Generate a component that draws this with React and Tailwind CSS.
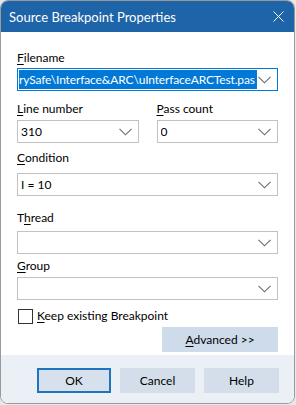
import React from "react";

const font = { fontFamily: 'Lato, "Noto Sans", sans-serif' };

function Chevron() {
  return (
    <svg width="13" height="8" viewBox="0 0 13 8" className="shrink-0">
      <path d="M0.5 0.8 L6.5 6.8 L12.5 0.8" fill="none" stroke="#6b6b6b" strokeWidth="1.1" />
    </svg>
  );
}

function Combo({ value, className = "" }) {
  return (
    <div className={"flex items-center h-[23px] border border-[#c2c2c2] bg-white pl-[3px] pr-[6px] " + className}>
      <div className="flex-1 text-[12px] leading-4 text-black whitespace-nowrap overflow-hidden">{value}</div>
      <Chevron />
    </div>
  );
}

function Label({ pre = "", u, post, className = "" }) {
  return (
    <div className={"h-4 text-[12px] leading-4 text-black whitespace-nowrap " + className}>
      {pre}<span className="underline underline-offset-2">{u}</span>{post}
    </div>
  );
}

export default function App() {
  return (
    <div className="w-[296px] h-[405px] bg-[#e8e8e8] overflow-hidden" style={font}>
      <div className="w-[295px] h-[404px] rounded-lg border border-[#9a9a9a] overflow-hidden flex flex-col bg-white">
        <div className="h-[31px] bg-[#1e64a8] flex items-center pl-[8px] pr-[10px] shrink-0">
          <div className="flex-1 text-white text-[13px] leading-4">Source Breakpoint Properties</div>
          <svg width="11" height="11" viewBox="0 0 11 11">
            <path d="M0.5 0.5 L10.5 10.5 M10.5 0.5 L0.5 10.5" stroke="white" strokeWidth="1" />
          </svg>
        </div>
        <div className="flex-1 px-[16px] flex flex-col">
          <Label u="F" post="ilename" className="mt-[18px]" />
          <div className="mt-[2px] flex items-center h-[23px] border border-[#0078d7] bg-white pl-[1px] pr-[6px]">
            <div className="w-[238px] h-[19px] bg-[#0078d7] text-white text-[12px] tracking-[-0.15px] leading-[19px] whitespace-nowrap overflow-hidden">
              rySafe\Interface&amp;ARC\uInterfaceARCTest.pas
            </div>
            <div className="flex-1" />
            <Chevron />
          </div>
          <div className="mt-[10px] flex gap-[18px]">
            <div className="flex-1 flex flex-col">
              <Label u="L" post="ine number" />
              <Combo value="310" className="mt-[3px]" />
            </div>
            <div className="flex-1 flex flex-col">
              <Label u="P" post="ass count" />
              <Combo value="0" className="mt-[3px]" />
            </div>
          </div>
          <Label u="C" post="ondition" className="mt-[7px]" />
          <Combo value="I = 10" className="mt-[7px]" />
          <Label pre="T" u="h" post="read" className="mt-[14px]" />
          <Combo value="" className="mt-[5px] h-[22px]" />
          <Label u="G" post="roup" className="mt-[4px]" />
          <Combo value="" className="mt-[3px] h-[22px]" />
          <div className="mt-[8px] flex items-center gap-[4px] pl-[1px]">
            <div className="w-[15px] h-[15px] border border-[#333] bg-white" />
            <div className="text-[12px] leading-4 text-black">
              <span className="underline underline-offset-2">K</span>eep existing Breakpoint
            </div>
          </div>
          <div className="mt-[3px] flex justify-end">
            <div className="w-[116px] h-[25px] bg-[#cddbea] flex items-center justify-center text-[12px] text-black">
              <span className="underline underline-offset-2">A</span>dvanced &gt;&gt;
            </div>
          </div>
        </div>
        <div className="h-[48px] bg-[#eaf0f6] flex items-start pt-[13px] justify-end gap-[9px] pr-[15px] shrink-0">
          <div className="w-[74px] h-[25px] border-2 border-[#1f74c0] bg-[#d6e1ed] flex items-center justify-center text-[12px] text-black">OK</div>
          <div className="w-[75px] h-[25px] bg-[#d3deea] flex items-center justify-center text-[12px] text-black">Cancel</div>
          <div className="w-[75px] h-[25px] bg-[#d3deea] flex items-center justify-center text-[12px] text-black">Help</div>
        </div>
      </div>
    </div>
  );
}
